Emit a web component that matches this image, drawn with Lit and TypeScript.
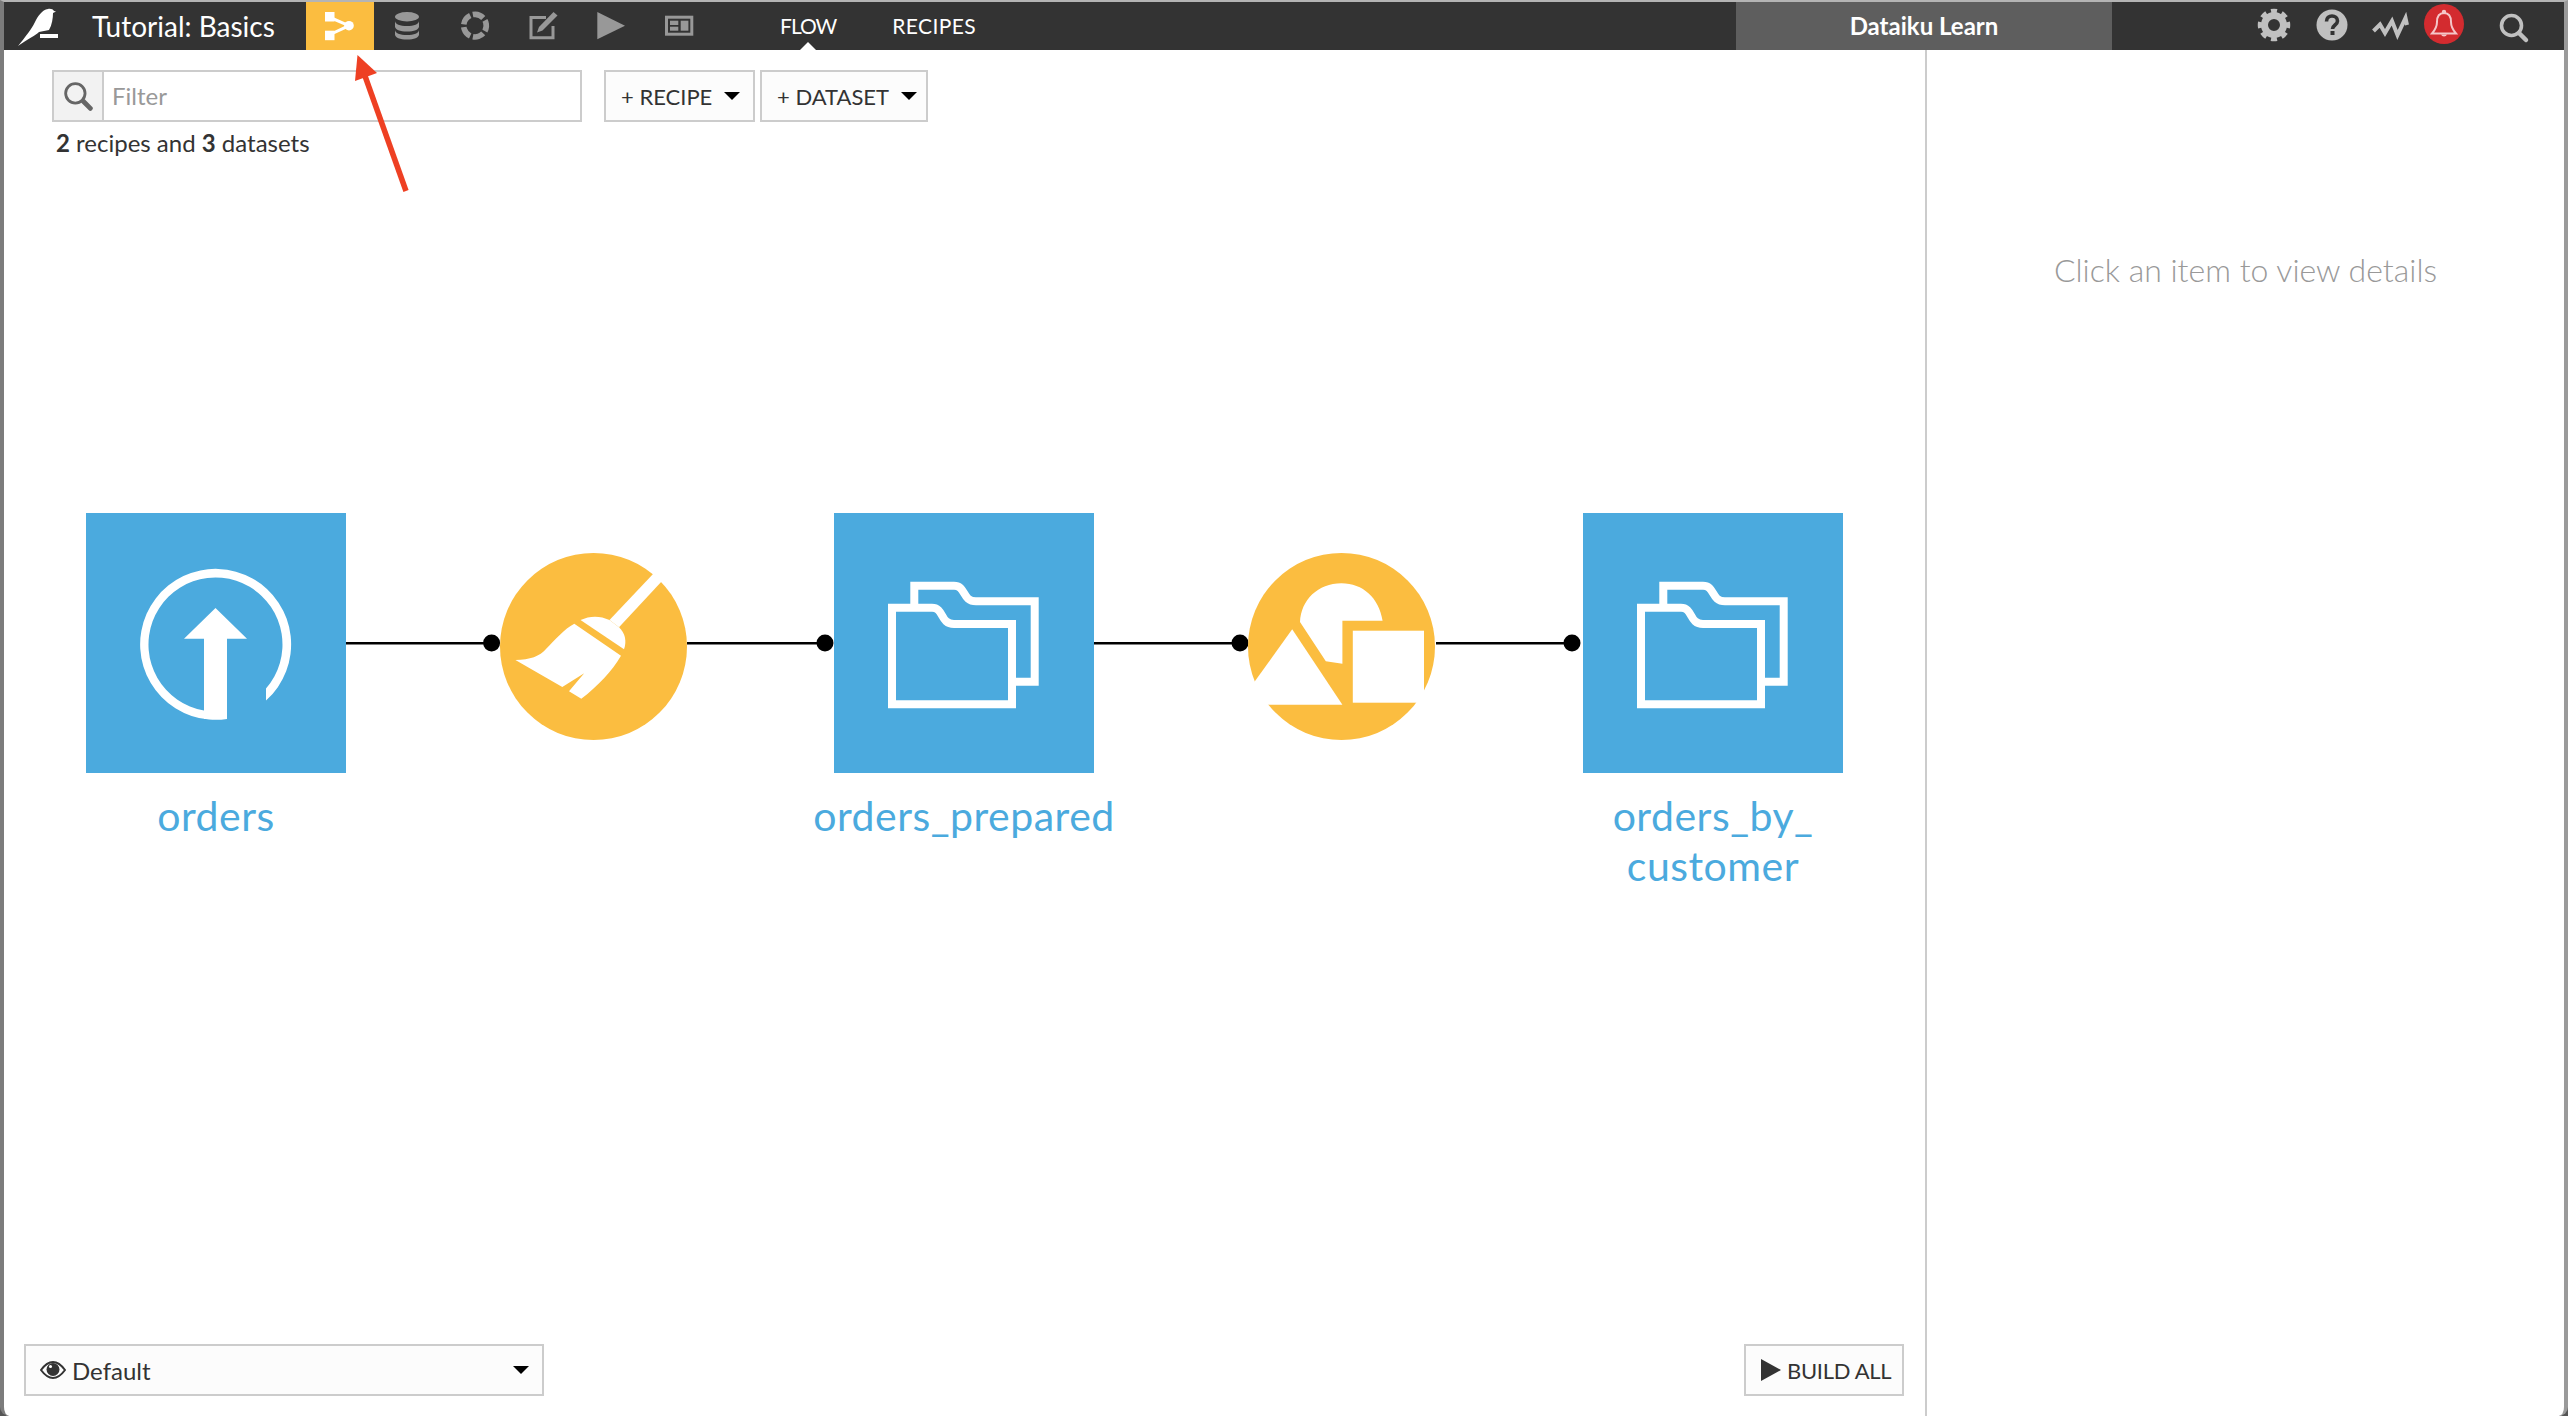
import { LitElement, html, svg, css, unsafeCSS } from 'lit';
import { customElement } from 'lit/decorators.js';

const BLUE = '#4baade';
const ORANGE = '#fbbd40';

const tabs = [
    // flow
    svg`<path d="M23 15 43 23.7 23 33" fill="none" stroke="#fff" stroke-width="3"/>
        <rect x="19" y="10" width="9.5" height="9.5" fill="#fff"/>
        <rect x="19" y="28.7" width="9.5" height="9.5" fill="#fff"/>
        <circle cx="43" cy="23.7" r="4.8" fill="#fff"/>`,
    // datasets
    svg`<ellipse cx="33" cy="14.7" rx="12" ry="4.7"/>
        <path d="M21 19c0 3 5 5 12 5s12-2 12-5v5.5c0 3-5 5-12 5s-12-2-12-5z"/>
        <path d="M21 28c0 3 5 5 12 5s12-2 12-5v4.5c0 3-5 5-12 5s-12-2-12-5z"/>`,
    // recipes ring
    svg`<circle cx="33" cy="23.7" r="11.3" fill="none" stroke="#989898" stroke-width="5.6" pathLength="50" stroke-dasharray="8 2" stroke-dashoffset="-1" transform="rotate(-108 33 23.7)"/>`,
    // notebook
    svg`<path d="M36 15.5H21V35.8H43V24" fill="none" stroke="#989898" stroke-width="3"/>
        <path d="M27 30.5 29 25 43.5 10 47.5 13.5 32.5 28.5z"/>`,
    // jobs
    svg`<path d="M19.3 10 47 23.7 19.3 37.3z"/>`,
    // dashboards
    svg`<rect x="20.5" y="15.2" width="25.3" height="17" fill="none" stroke="#989898" stroke-width="3"/>
        <rect x="24" y="18.7" width="8.3" height="4.3"/>
        <rect x="24" y="24.7" width="8.3" height="4"/>
        <rect x="34.7" y="18.7" width="7.7" height="10"/>`,
];

const nodes = [
    { kind: 'dataset', x: 82, icon: 'upload', label: 'orders' },
    { kind: 'recipe', x: 495.5, icon: 'broom' },
    { kind: 'dataset', x: 830, icon: 'folder', label: 'orders_prepared' },
    { kind: 'recipe', x: 1244, icon: 'shapes' },
    { kind: 'dataset', x: 1579, icon: 'folder', label: 'orders_by_\u200bcustomer' },
];

const edges = [
    { from: 341, to: 487.6 },
    { from: 683, to: 821 },
    { from: 1090, to: 1236 },
    { from: 1432, to: 1568 },
];

const icons: Record<string, unknown> = {
    upload: svg`<path d="M180 175.5A67 67 0 1 0 118 197.5L141 206A75.5 75.5 0 1 1 180 187.6Z" fill="#fff"/>
        <path d="M129.5 95 161 125.7H141V206H118V125.7H98Z" fill="#fff"/>`,
    folder: svg`<g fill="none" stroke="#fff" stroke-width="8">
        <path d="M80.3 94V72.7H120C132 72.7 128 88.3 142 88.3H200.7V168.7H178"/>
        <path d="M58 94.7H98C110 94.7 106 111 120 111H178V191.3H58Z"/></g>`,
    broom: svg`<g fill="#fff">
        <path d="M109.5 67 158 15.7 166 23.7 119 74.3Z"/>
        <path d="M80.5 67C90 62.5 100 62.5 109.5 67L119 74.3C125 80 127 88 124 96.3Z"/>
        <path d="M74.3 70.7 121 102.7C112 118 98 133 81.3 145.7L69 138.3 84.2 120.3 62.3 134 15.4 107C30 107 40 103 46 96C56 86 64 76 74.3 70.7Z"/></g>`,
    shapes: svg`<g fill="#fff">
        <path d="M52 69 77.8 108.3 94.4 110.7V67.7H134.6C131 45 115 30.3 93.4 30.3 70 30.3 53 47 52 69Z"/>
        <rect x="104.8" y="77.7" width="71.2" height="72"/>
        <path d="M44.2 76.3 94.4 151.7H-10Z"/></g>`,
};

@customElement('app-root')
export class AppRoot extends LitElement {
    static styles = css`
        :host {
            display: block;
            height: 100vh;
            background: #555;
            font-family: Lato, "Noto Sans", sans-serif;
            color: #333;
        }
        svg {
            display: block;
            flex: none;
        }
        .window {
            height: 100%;
            box-sizing: border-box;
            display: flex;
            flex-direction: column;
            background: #fff;
            border-top: 2px solid #b4b4b4;
            border-left: 4px solid #7c7c7c;
            border-right: 4px solid #9a9a9a;
            border-radius: 0 0 9px 9px;
            overflow: hidden;
        }

        .topbar {
            height: 48px;
            flex: none;
            display: flex;
            align-items: stretch;
            background: #333;
            color: #fff;
        }
        .title {
            width: 228px;
            padding-left: 14px;
            box-sizing: border-box;
            font-size: 28px;
            line-height: 48px;
        }
        .tab {
            width: 68px;
            fill: #989898;
        }
        .tab.active {
            background: ${unsafeCSS(ORANGE)};
        }
        .nav {
            display: flex;
            margin-left: 66px;
            gap: 56px;
            font-size: 21px;
            line-height: 48px;
        }
        .nav span {
            position: relative;
            letter-spacing: 0.4px;
        }
        .nav .current {
            letter-spacing: -1px;
        }
        .nav .current::after {
            content: "";
            position: absolute;
            left: 50%;
            bottom: 0;
            margin-left: -8px;
            border: 8px solid transparent;
            border-top: 0;
            border-bottom-color: #fff;
        }
        .instance {
            width: 376px;
            margin-left: auto;
            background: #5e5e5e;
            text-align: center;
            font-size: 24px;
            font-weight: 700;
            line-height: 48px;
        }
        .actions {
            width: 452px;
            flex: none;
        }

        .main {
            flex: 1;
            display: flex;
            min-height: 0;
        }
        .flow {
            flex: 1;
            position: relative;
            display: flex;
            flex-direction: column;
        }
        .toolbar {
            position: relative;
            display: flex;
            padding: 20px 0 0 48px;
        }
        .filter {
            width: 530px;
            height: 52px;
            box-sizing: border-box;
            display: flex;
            border: 2px solid #ccc;
            margin-right: 22px;
        }
        .filter-icon {
            width: 48px;
            display: flex;
            align-items: center;
            justify-content: center;
            background: #f2f2f2;
            border-right: 2px solid #ccc;
        }
        .filter-text {
            padding-left: 8px;
            font-size: 24px;
            line-height: 48px;
            color: #999;
        }
        .btn {
            height: 52px;
            box-sizing: border-box;
            display: flex;
            align-items: center;
            background: #fcfcfc;
            border: 2px solid #ccc;
            font-size: 22px;
            color: #333;
        }
        .add {
            padding-left: 15px;
            gap: 12px;
            margin-right: 5px;
        }
        .add.recipe-btn {
            width: 151px;
        }
        .add.dataset-btn {
            width: 168px;
        }
        .caret {
            width: 0;
            height: 0;
            border: 8px solid transparent;
            border-top-color: #000;
            border-bottom: 0;
        }
        .summary {
            position: relative;
            padding: 6px 0 0 52px;
            font-size: 24px;
            line-height: 30px;
        }
        .graph {
            position: absolute;
            inset: 0;
        }
        .edges {
            position: absolute;
            left: 0;
            top: 0;
        }
        .node {
            position: absolute;
            display: flex;
            flex-direction: column;
            align-items: center;
        }
        .node.dataset {
            top: 463px;
            width: 260px;
        }
        .node.recipe {
            top: 503px;
        }
        .dataset svg {
            background: ${unsafeCSS(BLUE)};
        }
        .label {
            width: 320px;
            margin-top: 18px;
            text-align: center;
            font-size: 41px;
            letter-spacing: 0.5px;
            line-height: 50px;
            color: ${unsafeCSS(BLUE)};
        }
        .footer {
            position: relative;
            margin-top: auto;
            display: flex;
            justify-content: space-between;
            padding: 0 21px 20px 20px;
        }
        .select {
            width: 520px;
            padding: 0 13px 0 14px;
            gap: 6px;
            font-size: 24px;
        }
        .select .caret {
            margin-left: auto;
        }
        .build {
            width: 160px;
            padding-left: 15px;
            gap: 6px;
            letter-spacing: -0.3px;
        }

        .side {
            width: 639px;
            flex: none;
            box-sizing: border-box;
            border-left: 2px solid #ccc;
            padding-top: 196px;
            text-align: center;
            font-size: 32px;
            font-weight: 300;
            line-height: 48px;
            color: #999;
        }
    `;

    render() {
        return html`
            <div class="window">
                ${this._topbar()}
                <div class="main">
                    <div class="flow">
                        ${this._graph()}
                        <div class="toolbar">
                            <div class="filter">
                                <div class="filter-icon">
                                    <svg width="30" height="30" viewBox="0 0 34 34" fill="none" stroke="#666">
                                        <circle cx="14" cy="14" r="11" stroke-width="3.2"/>
                                        <path d="M23 23 31 31" stroke-width="5.5" stroke-linecap="round"/>
                                    </svg>
                                </div>
                                <div class="filter-text">Filter</div>
                            </div>
                            <div class="btn add recipe-btn">+ RECIPE <span class="caret"></span></div>
                            <div class="btn add dataset-btn">+ DATASET <span class="caret"></span></div>
                        </div>
                        <div class="summary"><b>2</b> recipes and <b>3</b> datasets</div>
                        <div class="footer">
                            <div class="btn select">
                                <svg width="26" height="18" viewBox="0 0 26 18">
                                    <path d="M1 9C5 3.5 9 1 13 1s8 2.5 12 8c-4 5.5-8 8-12 8S5 14.5 1 9Z" fill="none" stroke="#333" stroke-width="2"/>
                                    <circle cx="13" cy="8.5" r="6.5" fill="#333"/>
                                    <circle cx="10.5" cy="5.5" r="1.5" fill="#fff"/>
                                </svg>
                                Default
                                <span class="caret"></span>
                            </div>
                            <div class="btn build">
                                <svg width="20" height="22" viewBox="0 0 20 22"><path d="M0 0 20 11 0 22Z" fill="#333"/></svg>
                                BUILD ALL
                            </div>
                        </div>
                        ${this._arrow()}
                    </div>
                    <div class="side">Click an item to view details</div>
                </div>
            </div>
        `;
    }

    _topbar() {
        return html`
            <div class="topbar">
                <svg width="74" height="48" viewBox="4 2 74 48">
                    <path fill="#fff" d="M18 46C26 36 31 30 35 22 38 16 42 10 48 9 51 8.5 53 9.5 54 11L56 11.5 53 13C53 18 52 25 49 30L39 32C36 35 28 39 18 46Z"/>
                    <rect x="40" y="34" width="18" height="4" fill="#fff"/>
                </svg>
                <div class="title">Tutorial: Basics</div>
                ${tabs.map((t, i) => html`
                    <svg class="tab ${i == 0 ? 'active' : ''}" width="68" height="48" viewBox="0 0 68 48">${t}</svg>
                `)}
                <div class="nav">
                    <span class="current">FLOW</span>
                    <span>RECIPES</span>
                </div>
                <div class="instance">Dataiku Learn</div>
                <svg class="actions" height="48" viewBox="2112 2 452 48">
                    <g fill="#c0c0c0" stroke="#c0c0c0">
                        <circle cx="2274" cy="25" r="9.5" fill="none" stroke-width="7"/>
                        <circle cx="2274" cy="25" r="13.5" fill="none" stroke-width="5.5" pathLength="16" stroke-dasharray="1.1 .9" stroke-dashoffset=".55"/>
                        <circle cx="2332" cy="25" r="15.5" stroke="none"/>
                    </g>
                    <path d="M2326.5 21.5c0-3.5 2.5-5.5 5.5-5.5s5.5 2 5.5 5c0 4-5 4-5 8" fill="none" stroke="#333" stroke-width="3.6"/>
                    <rect x="2330.5" y="31" width="4" height="4" fill="#333"/>
                    <path d="M2373.5 31 2380 24.5 2385 33 2392 21 2397.5 35 2405.5 18 2407 25" fill="none" stroke="#c0c0c0" stroke-width="4"/>
                    <circle cx="2444" cy="24" r="20" fill="#d32b2f"/>
                    <g fill="none" stroke="#f5c6c8" stroke-width="2">
                        <path d="M2444 13c-5.5 0-7 4.5-7 9 0 5-1.5 7.5-5 11.5h24c-3.5-4-5-6.5-5-11.5 0-4.5-1.5-9-7-9Z"/>
                        <circle cx="2444" cy="12" r="1.2"/>
                    </g>
                    <path d="M2441 34.5a3.2 3.2 0 0 0 6 0Z" fill="#f5c6c8"/>
                    <g fill="none" stroke="#c0c0c0">
                        <circle cx="2511.5" cy="25.5" r="10" stroke-width="3.6"/>
                        <path d="M2519 33 2526 40" stroke-width="4.5" stroke-linecap="round"/>
                    </g>
                </svg>
            </div>
        `;
    }

    _graph() {
        return html`
            <div class="graph">
                <svg class="edges" width="1921" height="700">
                    ${edges.map(e => svg`
                        <line x1=${e.from} x2=${e.to} y1="593.2" y2="593.2" stroke="#000" stroke-width="2.5"/>
                        <circle cx=${e.to} cy="593" r="8.5"/>
                    `)}
                </svg>
                ${nodes.map(n => this._node(n))}
            </div>
        `;
    }

    _node(n: { kind: string; x: number; icon: string; label?: string }) {
        if (n.kind == 'recipe') {
            return html`
                <div class="node recipe" style="left:${n.x}px">
                    <svg width="187" height="187" viewBox="0 0 187 187">
                        <circle cx="93.5" cy="93.5" r="93.5" fill=${ORANGE}/>
                        ${icons[n.icon]}
                    </svg>
                </div>
            `;
        }
        return html`
            <div class="node dataset" style="left:${n.x}px">
                <svg width="260" height="260" viewBox="0 0 260 260">${icons[n.icon]}</svg>
                <div class="label">${n.label}</div>
            </div>
        `;
    }

    // annotation drawn over the screenshot
    _arrow() {
        return html`
            <svg class="edges" width="500" height="160" viewBox="4 50 500 160">
                <path d="M406 191 365 76" stroke="#ee4023" stroke-width="5.5" fill="none"/>
                <path d="M357.5 55 377 73 355 81Z" fill="#ee4023"/>
            </svg>
        `;
    }
}
